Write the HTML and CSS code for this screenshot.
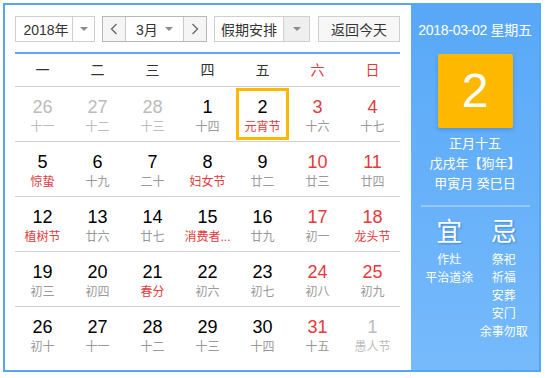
FILE: index.html
```html
<!DOCTYPE html>
<html lang="zh">
<head>
<meta charset="UTF-8">
<title>万年历</title>
<link rel="stylesheet" href="styles.css">
</head>
<body>
<div class="calendar">
    <div class="main">
        <div class="toolbar">
            <div class="select year">
                <span class="select-text">2018年</span>
                <span class="select-arrow"><i class="caret"></i></span>
            </div>
            <div class="month-group">
                <span class="step">
                    <svg width="8" height="12" viewBox="0 0 8 12"><polyline points="6.5,1 1.5,6 6.5,11" fill="none" stroke="#666" stroke-width="1.3"/></svg>
                </span>
                <span class="month">
                    <span class="month-text">3月</span>
                    <i class="caret"></i>
                </span>
                <span class="step">
                    <svg width="8" height="12" viewBox="0 0 8 12"><polyline points="1.5,1 6.5,6 1.5,11" fill="none" stroke="#666" stroke-width="1.3"/></svg>
                </span>
            </div>
            <div class="select holiday">
                <span class="select-text">假期安排</span>
                <span class="select-arrow grey"><i class="caret"></i></span>
            </div>
            <button class="today-btn">返回今天</button>
        </div>

        <div class="weekdays">
            <span>一</span><span>二</span><span>三</span><span>四</span><span>五</span>
            <span class="red">六</span><span class="red">日</span>
        </div>

        <div class="week">
            <div class="day other"><span class="num">26</span><span class="lunar">十一</span></div>
            <div class="day other"><span class="num">27</span><span class="lunar">十二</span></div>
            <div class="day other"><span class="num">28</span><span class="lunar">十三</span></div>
            <div class="day"><span class="num">1</span><span class="lunar">十四</span></div>
            <div class="day today"><span class="num">2</span><span class="lunar fest">元宵节</span></div>
            <div class="day weekend"><span class="num">3</span><span class="lunar">十六</span></div>
            <div class="day weekend"><span class="num">4</span><span class="lunar">十七</span></div>
        </div>
        <div class="week">
            <div class="day"><span class="num">5</span><span class="lunar fest">惊蛰</span></div>
            <div class="day"><span class="num">6</span><span class="lunar">十九</span></div>
            <div class="day"><span class="num">7</span><span class="lunar">二十</span></div>
            <div class="day"><span class="num">8</span><span class="lunar fest">妇女节</span></div>
            <div class="day"><span class="num">9</span><span class="lunar">廿二</span></div>
            <div class="day weekend"><span class="num">10</span><span class="lunar">廿三</span></div>
            <div class="day weekend"><span class="num">11</span><span class="lunar">廿四</span></div>
        </div>
        <div class="week">
            <div class="day"><span class="num">12</span><span class="lunar fest">植树节</span></div>
            <div class="day"><span class="num">13</span><span class="lunar">廿六</span></div>
            <div class="day"><span class="num">14</span><span class="lunar">廿七</span></div>
            <div class="day"><span class="num">15</span><span class="lunar fest">消费者...</span></div>
            <div class="day"><span class="num">16</span><span class="lunar">廿九</span></div>
            <div class="day weekend"><span class="num">17</span><span class="lunar">初一</span></div>
            <div class="day weekend"><span class="num">18</span><span class="lunar fest">龙头节</span></div>
        </div>
        <div class="week">
            <div class="day"><span class="num">19</span><span class="lunar">初三</span></div>
            <div class="day"><span class="num">20</span><span class="lunar">初四</span></div>
            <div class="day"><span class="num">21</span><span class="lunar fest">春分</span></div>
            <div class="day"><span class="num">22</span><span class="lunar">初六</span></div>
            <div class="day"><span class="num">23</span><span class="lunar">初七</span></div>
            <div class="day weekend"><span class="num">24</span><span class="lunar">初八</span></div>
            <div class="day weekend"><span class="num">25</span><span class="lunar">初九</span></div>
        </div>
        <div class="week last">
            <div class="day"><span class="num">26</span><span class="lunar">初十</span></div>
            <div class="day"><span class="num">27</span><span class="lunar">十一</span></div>
            <div class="day"><span class="num">28</span><span class="lunar">十二</span></div>
            <div class="day"><span class="num">29</span><span class="lunar">十三</span></div>
            <div class="day"><span class="num">30</span><span class="lunar">十四</span></div>
            <div class="day weekend"><span class="num">31</span><span class="lunar">十五</span></div>
            <div class="day other"><span class="num">1</span><span class="lunar">愚人节</span></div>
        </div>
    </div>

    <div class="side">
        <div class="side-date">2018-03-02 星期五</div>
        <div class="big-day">2</div>
        <div class="lunar-info">
            <div>正月十五</div>
            <div>戊戌年【狗年】</div>
            <div>甲寅月 癸巳日</div>
        </div>
        <div class="divider"></div>
        <div class="almanac">
            <div class="almanac-col">
                <div class="almanac-title">宜</div>
                <div>作灶</div>
                <div>平治道涂</div>
            </div>
            <div class="almanac-col">
                <div class="almanac-title">忌</div>
                <div>祭祀</div>
                <div>祈福</div>
                <div>安葬</div>
                <div>安门</div>
                <div>余事勿取</div>
            </div>
        </div>
    </div>
</div>
</body>
</html>
```

FILE: styles.css
```css
body {
    margin: 0;
    padding: 3px;
    background: #fff;
    font-family: "Liberation Sans", "Noto Sans CJK SC", sans-serif;
    color: #000;
}

.calendar {
    width: 538px;
    height: 369px;
    box-sizing: border-box;
    border: 2px solid #55a6f6;
    display: flex;
}

.main {
    width: 406px;
    box-sizing: border-box;
    padding: 11px 11px 0 10px;
    background: #fff;
}

/* toolbar */
.toolbar {
    display: flex;
    gap: 7px;
    height: 26px;
    padding-bottom: 10px;
    border-bottom: 2px solid #5aa8f4;
    font-size: 14px;
    color: #333;
}

.select {
    display: flex;
    border: 1px solid #cfcfcf;
    box-sizing: border-box;
    height: 26px;
}

.select-text {
    display: flex;
    align-items: center;
    justify-content: center;
}

.year { width: 80px; }
.year .select-text { width: 56px; padding-left: 4px; box-sizing: border-box; }

.holiday { width: 96px; }
.holiday .select-text { width: 68px; }

.select-arrow {
    flex: 1;
    border-left: 1px solid #cfcfcf;
    display: flex;
    align-items: center;
    justify-content: center;
}

.select-arrow.grey { background: #efefef; }

.caret {
    display: block;
    width: 0;
    height: 0;
    border-left: 4px solid transparent;
    border-right: 4px solid transparent;
    border-top: 4px solid #8a8a8a;
}

.month-group {
    display: flex;
    width: 105px;
    height: 26px;
    box-sizing: border-box;
    border: 1px solid #b8b8b8;
}

.step {
    width: 22px;
    background: #f5f5f5;
    display: flex;
    align-items: center;
    justify-content: center;
}

.month {
    flex: 1;
    border-left: 1px solid #c8c8c8;
    border-right: 1px solid #c8c8c8;
    display: flex;
    align-items: center;
    padding: 0 10px 0 10px;
    justify-content: space-between;
}

.today-btn {
    margin-left: auto;
    width: 82px;
    height: 26px;
    border: 1px solid #cfcfcf;
    background: #f7f7f7;
    font-family: inherit;
    font-size: 14px;
    color: #333;
    padding: 0;
}

/* grid */
.weekdays,
.week {
    display: grid;
    grid-template-columns: repeat(7, 55px);
    border-bottom: 1px solid #d2d2d2;
}

.weekdays span {
    height: 32px;
    line-height: 32px;
    text-align: center;
    font-size: 14px;
    color: #333;
}

.weekdays .red { color: #e4393c; }

.week.last { border-bottom: none; }

.day {
    height: 54px;
    box-sizing: border-box;
    padding-top: 10px;
    display: flex;
    flex-direction: column;
    align-items: center;
}

.num {
    font-size: 18px;
    line-height: 20px;
}

.lunar {
    font-size: 12px;
    line-height: 20px;
    color: #999;
    white-space: nowrap;
}

.lunar.fest { color: #e4393c; }

.weekend .num { color: #e4393c; }

.other .num,
.other .lunar { color: #bbb; }

.today {
    outline: 3px solid #ffb800;
    outline-offset: -4px;
}

/* side panel */
.side {
    width: 128px;
    background: linear-gradient(#58a8f8, #76bafb);
    color: #fff;
    padding-top: 15px;
    box-sizing: border-box;
    text-align: center;
}

.side-date {
    font-size: 14px;
    line-height: 20px;
    letter-spacing: -0.3px;
}

.big-day {
    width: 75px;
    height: 74px;
    margin: 14px auto 0;
    background: #ffb800;
    border-radius: 2px;
    box-shadow: 0 2px 4px rgba(0, 40, 120, 0.2);
    font-size: 48px;
    line-height: 74px;
}

.lunar-info {
    margin-top: 6px;
    font-size: 13px;
    line-height: 20px;
}

.divider {
    height: 2px;
    margin: 11px 9px 0 10px;
    background: rgba(255, 255, 255, 0.3);
}

.almanac {
    display: flex;
    padding: 10px 8px 0 11px;
    font-size: 12px;
    line-height: 18px;
}

.almanac-col { flex: 1; }

.almanac-title {
    font-size: 26px;
    line-height: 30px;
    margin-bottom: 4px;
    text-shadow: 1px 1px 2px rgba(0, 60, 150, 0.4);
}
```
